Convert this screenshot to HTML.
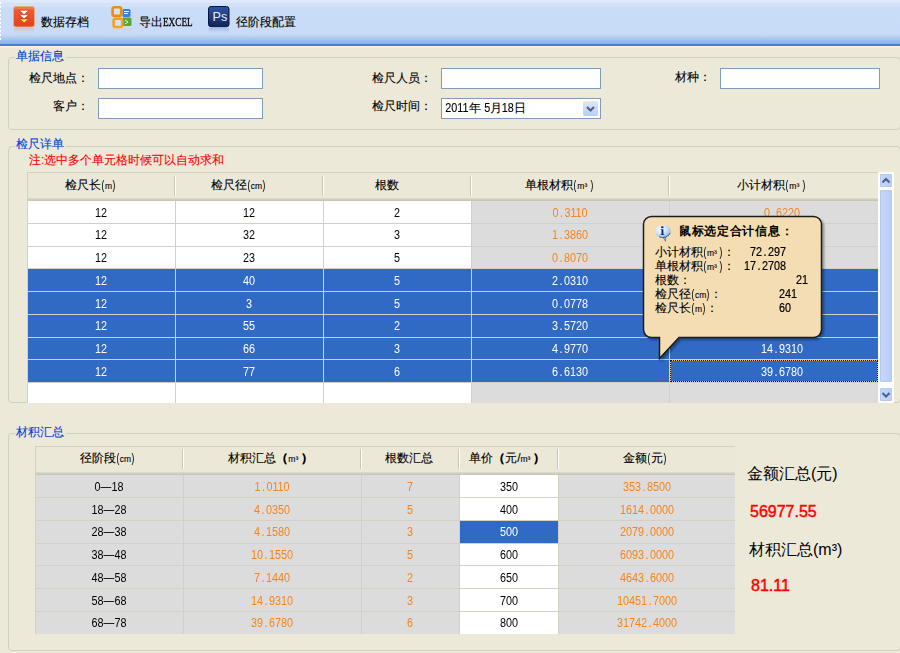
<!DOCTYPE html>
<html><head><meta charset="utf-8">
<style>
*{box-sizing:border-box;margin:0;padding:0}
html,body{width:900px;height:653px;overflow:hidden;background:#ece9d8;font-family:"Liberation Sans",sans-serif;font-size:12px;color:#000}
.lbl,.tbt,.gt,.tl{-webkit-text-stroke:.12px}
.nd{display:inline-block;transform:scaleX(.9);margin:0 -.5px}
.u{font-size:8.5px;font-family:"Liberation Sans",sans-serif}
.p{font-size:12px;display:inline-block;transform:scaleX(.7)}
.a{position:absolute}
#tb{left:0;top:0;width:900px;height:46px;background:linear-gradient(#dfeafb 0,#dce8fb 3px,#d2e2f9 3px,#d2e2f9 7px,#c9dcf8 7px,#c8dcf8 34px,#aac6ef 39px,#8cb0e5 44px,#4d7dc8 44px,#4d7dc8 46px)}
#tb2{left:0;top:46px;width:900px;height:2px;background:linear-gradient(#fdf7e0,#f2eedc)}
.tbt{font-size:12px;top:14.5px;line-height:14px;color:#000}
.grp{border:1px solid #d0d0bf;border-radius:4px}
.gt{color:#0046d5;background:#ece9d8;line-height:13px;padding:1px 2px 0 1px;font-size:12px}
.lbl{line-height:13px;font-size:12px}
.inp{background:#fff;border:1px solid #7f9db9}
.hdr{background:#ebe8d8;border-top:1px solid #d2cfc6}
.hs{width:2px;border-left:1px solid #c9c5b5;border-right:1px solid #fff}
.cell{position:absolute;text-align:center;line-height:22px;font-size:12px;font-family:"Liberation Sans",sans-serif;transform:scaleX(.9)}
.dp{display:inline-block;width:6.67px;text-align:center}

.sbb{background:linear-gradient(90deg,#c8d8fb,#b9cdf8);border:1px solid #fff;border-radius:2px;box-shadow:0 0 0 1px #b4c8f0 inset}
.tl{left:655px;font-size:12px;line-height:14px}
.tn{font-size:12px;transform:scaleX(.9);transform-origin:0 0;-webkit-text-stroke:.2px}
</style></head><body>
<!-- toolbar -->
<div id="tb" class="a"></div><div id="tb2" class="a"></div>
<div class="a" style="left:0;top:2px;width:1px;height:38px;background:repeating-linear-gradient(#fff 0 2px,transparent 2px 4px)"></div>

<!-- icon 1 -->
<svg class="a" style="left:13px;top:6px" width="22" height="30" viewBox="0 0 22 30">
<defs><linearGradient id="rg" x1="0" y1="0" x2="0" y2="1"><stop offset="0" stop-color="#f0603a"/><stop offset="1" stop-color="#e0401c"/></linearGradient>
<linearGradient id="rf" x1="0" y1="0" x2="0" y2="1"><stop offset="0" stop-color="#e0a090" stop-opacity=".45"/><stop offset="1" stop-color="#c8dcf8" stop-opacity="0"/></linearGradient></defs>
<rect x="0.5" y="0.5" width="21" height="20.5" rx="2.5" fill="url(#rg)" stroke="#f0a878" stroke-width="1"/>
<rect x="1.5" y="1.2" width="19" height="2" fill="#f88a6a" opacity=".6"/>
<path d="M6.3 4.3H15.8L11.05 8.6Z" fill="#fff" stroke="#a03018" stroke-width=".5"/>
<path d="M6.3 8.8H15.8L11.05 12.8Z" fill="#fff" stroke="#a03018" stroke-width=".5"/>
<path d="M6.8 13H15.5L11.15 16.9Z" fill="#ffe050" stroke="#a03018" stroke-width=".5"/>
<rect x="0.5" y="22" width="21" height="7" fill="url(#rf)"/>
</svg>
<div class="a tbt" style="left:41px">数据存档</div>

<!-- icon 2 -->
<svg class="a" style="left:111px;top:6px" width="21" height="30" viewBox="0 0 21 30">
<defs><linearGradient id="of" x1="0" y1="0" x2="0" y2="1"><stop offset="0" stop-color="#e8c8a0" stop-opacity=".4"/><stop offset="1" stop-color="#c8dcf8" stop-opacity="0"/></linearGradient></defs>
<rect x="11.5" y="3" width="8" height="8" rx="1.5" fill="#3a80da"/>
<path d="M13 5.5h5M13 7.5h4" stroke="#e8f2ff" stroke-width="1"/>
<rect x="11" y="11.5" width="9.5" height="8.5" rx="1.5" fill="#5ea430"/>
<path d="M14 14l3 2-3 2" stroke="#e8f4d8" stroke-width="1" fill="none"/>
<rect x="1.6" y="1.3" width="8.6" height="8.6" rx="2" fill="#cfe6fb" stroke="#f48a14" stroke-width="2.6"/>
<rect x="2.6" y="12.8" width="8.6" height="8.2" rx="2" fill="#cfe6fb" stroke="#f8a020" stroke-width="2.6"/>
<rect x="0" y="22" width="21" height="7" fill="url(#of)"/>
</svg>
<div class="a tbt" style="left:139px">导出<span style="display:inline-block;font-family:'Liberation Serif',serif;font-size:11.5px;transform:scaleX(.8);transform-origin:0 50%;-webkit-text-stroke:.3px">EXCEL</span></div>

<!-- icon 3 -->
<svg class="a" style="left:208px;top:6px" width="22" height="30" viewBox="0 0 22 30">
<defs><linearGradient id="pg" x1="0" y1="0" x2="0" y2="1"><stop offset="0" stop-color="#2c57a0"/><stop offset=".6" stop-color="#1c3a7a"/><stop offset="1" stop-color="#0f2458"/></linearGradient>
<linearGradient id="pf" x1="0" y1="0" x2="0" y2="1"><stop offset="0" stop-color="#6080b8" stop-opacity=".35"/><stop offset="1" stop-color="#c8dcf8" stop-opacity="0"/></linearGradient></defs>
<rect x="0.5" y="0.5" width="20.5" height="20.2" rx="2.5" fill="url(#pg)" stroke="#0a1838" stroke-width="1"/>
<text x="4.6" y="14.8" font-family="Liberation Sans" font-size="12.6" fill="#e6eefa">Ps</text>
<rect x="0.5" y="22" width="20.5" height="7" fill="url(#pf)"/>
</svg>
<div class="a tbt" style="left:236px">径阶段配置</div>

<!-- group 1 -->
<div class="a grp" style="left:8px;top:57px;width:893px;height:73px"></div>
<div class="a gt" style="left:15px;top:49px">单据信息</div>
<div class="a lbl" style="left:29px;top:72px">检尺地点：</div>
<div class="a inp" style="left:98px;top:68px;width:165px;height:21px"></div>
<div class="a lbl" style="left:53px;top:100px">客户：</div>
<div class="a inp" style="left:98px;top:98px;width:165px;height:21px"></div>
<div class="a lbl" style="left:372px;top:72px">检尺人员：</div>
<div class="a inp" style="left:441px;top:68px;width:160px;height:21px"></div>
<div class="a lbl" style="left:372px;top:100px">检尺时间：</div>
<div class="a inp" style="left:441px;top:98px;width:160px;height:21px"></div>
<div class="a lbl" style="left:444px;top:101.5px"><span class=nd>2011</span>年&nbsp;<span class=nd>5</span>月<span class=nd>18</span>日</div>
<div class="a" style="left:583px;top:101px;width:15px;height:15px;background:linear-gradient(#dfe8fb,#b8cdf6);border-radius:2px"></div>
<svg class="a" style="left:583px;top:101px" width="15" height="15"><path d="M4 6l3.5 3.5L11 6" stroke="#4d6185" stroke-width="2" fill="none"/></svg>
<div class="a lbl" style="left:675px;top:71px">材种：</div>
<div class="a inp" style="left:720px;top:68px;width:160px;height:21px"></div>

<!-- group 2 -->
<div class="a grp" style="left:8px;top:146px;width:893px;height:257px"></div>
<div class="a gt" style="left:15px;top:137px">检尺详单</div>
<div class="a lbl" style="left:29px;top:154px;color:#f00">注:选中多个单元格时候可以自动求和</div>

<div class="a" style="left:27px;top:172px;width:851px;height:231px;background:#fff"></div>
<div class="a hdr" style="left:27px;top:172px;width:851px;height:28.5px"></div>
<div class="a" style="left:27px;top:198px;width:851px;height:3px;background:linear-gradient(#e0dccd,#c5c1b0)"></div>
<div class="a lbl" style="left:10.5px;width:160px;text-align:center;top:179px">检尺长<span class=p>(</span><span class=u>m</span><span class=p>)</span></div>
<div class="a lbl" style="left:158.5px;width:160px;text-align:center;top:179px">检尺径<span class=p>(</span><span class=u>cm</span><span class=p>)</span></div>
<div class="a lbl" style="left:306.5px;width:160px;text-align:center;top:179px">根数</div>
<div class="a lbl" style="left:479.5px;width:160px;text-align:center;top:179px">单根材积<span class=p>(</span><span class=u>m³</span>&thinsp;<span class=p>)</span></div>
<div class="a lbl" style="left:691.5px;width:160px;text-align:center;top:179px">小计材积<span class=p>(</span><span class=u>m³</span>&thinsp;<span class=p>)</span></div>
<div class="a hs" style="left:174px;top:176px;height:20px"></div>
<div class="a hs" style="left:322px;top:176px;height:20px"></div>
<div class="a hs" style="left:470px;top:176px;height:20px"></div>
<div class="a hs" style="left:668px;top:176px;height:20px"></div>
<div class="a" style="left:27px;top:200.50px;width:148px;height:22.75px;background:#fff"></div>
<div class="a cell" style="left:41.0px;width:120px;top:201.50px;color:#000">12</div>
<div class="a" style="left:175px;top:200.50px;width:148px;height:22.75px;background:#fff"></div>
<div class="a cell" style="left:189.0px;width:120px;top:201.50px;color:#000">12</div>
<div class="a" style="left:323px;top:200.50px;width:148px;height:22.75px;background:#fff"></div>
<div class="a cell" style="left:337.0px;width:120px;top:201.50px;color:#000">2</div>
<div class="a" style="left:471px;top:200.50px;width:198px;height:22.75px;background:#dcdcdc"></div>
<div class="a cell" style="left:510.0px;width:120px;top:201.50px;color:#f78418">0<span class=dp>.</span>3110</div>
<div class="a" style="left:669px;top:200.50px;width:209px;height:22.75px;background:#dcdcdc"></div>
<div class="a cell" style="left:722.0px;width:120px;top:201.50px;color:#f78418">0<span class=dp>.</span>6220</div>
<div class="a" style="left:27px;top:223.25px;width:148px;height:22.75px;background:#fff"></div>
<div class="a cell" style="left:41.0px;width:120px;top:224.25px;color:#000">12</div>
<div class="a" style="left:175px;top:223.25px;width:148px;height:22.75px;background:#fff"></div>
<div class="a cell" style="left:189.0px;width:120px;top:224.25px;color:#000">32</div>
<div class="a" style="left:323px;top:223.25px;width:148px;height:22.75px;background:#fff"></div>
<div class="a cell" style="left:337.0px;width:120px;top:224.25px;color:#000">3</div>
<div class="a" style="left:471px;top:223.25px;width:198px;height:22.75px;background:#dcdcdc"></div>
<div class="a cell" style="left:510.0px;width:120px;top:224.25px;color:#f78418">1<span class=dp>.</span>3860</div>
<div class="a" style="left:669px;top:223.25px;width:209px;height:22.75px;background:#dcdcdc"></div>
<div class="a cell" style="left:722.0px;width:120px;top:224.25px;color:#f78418">4<span class=dp>.</span>1580</div>
<div class="a" style="left:27px;top:246.00px;width:148px;height:22.75px;background:#fff"></div>
<div class="a cell" style="left:41.0px;width:120px;top:247.00px;color:#000">12</div>
<div class="a" style="left:175px;top:246.00px;width:148px;height:22.75px;background:#fff"></div>
<div class="a cell" style="left:189.0px;width:120px;top:247.00px;color:#000">23</div>
<div class="a" style="left:323px;top:246.00px;width:148px;height:22.75px;background:#fff"></div>
<div class="a cell" style="left:337.0px;width:120px;top:247.00px;color:#000">5</div>
<div class="a" style="left:471px;top:246.00px;width:198px;height:22.75px;background:#dcdcdc"></div>
<div class="a cell" style="left:510.0px;width:120px;top:247.00px;color:#f78418">0<span class=dp>.</span>8070</div>
<div class="a" style="left:669px;top:246.00px;width:209px;height:22.75px;background:#dcdcdc"></div>
<div class="a cell" style="left:722.0px;width:120px;top:247.00px;color:#f78418">4<span class=dp>.</span>0350</div>
<div class="a" style="left:27px;top:268.75px;width:148px;height:22.75px;background:#316ac5"></div>
<div class="a cell" style="left:41.0px;width:120px;top:269.75px;color:#fff">12</div>
<div class="a" style="left:175px;top:268.75px;width:148px;height:22.75px;background:#316ac5"></div>
<div class="a cell" style="left:189.0px;width:120px;top:269.75px;color:#fff">40</div>
<div class="a" style="left:323px;top:268.75px;width:148px;height:22.75px;background:#316ac5"></div>
<div class="a cell" style="left:337.0px;width:120px;top:269.75px;color:#fff">5</div>
<div class="a" style="left:471px;top:268.75px;width:198px;height:22.75px;background:#316ac5"></div>
<div class="a cell" style="left:510.0px;width:120px;top:269.75px;color:#fff">2<span class=dp>.</span>0310</div>
<div class="a" style="left:669px;top:268.75px;width:209px;height:22.75px;background:#316ac5"></div>
<div class="a cell" style="left:722.0px;width:120px;top:269.75px;color:#fff">10<span class=dp>.</span>1550</div>
<div class="a" style="left:27px;top:291.50px;width:148px;height:22.75px;background:#316ac5"></div>
<div class="a cell" style="left:41.0px;width:120px;top:292.50px;color:#fff">12</div>
<div class="a" style="left:175px;top:291.50px;width:148px;height:22.75px;background:#316ac5"></div>
<div class="a cell" style="left:189.0px;width:120px;top:292.50px;color:#fff">3</div>
<div class="a" style="left:323px;top:291.50px;width:148px;height:22.75px;background:#316ac5"></div>
<div class="a cell" style="left:337.0px;width:120px;top:292.50px;color:#fff">5</div>
<div class="a" style="left:471px;top:291.50px;width:198px;height:22.75px;background:#316ac5"></div>
<div class="a cell" style="left:510.0px;width:120px;top:292.50px;color:#fff">0<span class=dp>.</span>0778</div>
<div class="a" style="left:669px;top:291.50px;width:209px;height:22.75px;background:#316ac5"></div>
<div class="a cell" style="left:722.0px;width:120px;top:292.50px;color:#fff">0<span class=dp>.</span>3890</div>
<div class="a" style="left:27px;top:314.25px;width:148px;height:22.75px;background:#316ac5"></div>
<div class="a cell" style="left:41.0px;width:120px;top:315.25px;color:#fff">12</div>
<div class="a" style="left:175px;top:314.25px;width:148px;height:22.75px;background:#316ac5"></div>
<div class="a cell" style="left:189.0px;width:120px;top:315.25px;color:#fff">55</div>
<div class="a" style="left:323px;top:314.25px;width:148px;height:22.75px;background:#316ac5"></div>
<div class="a cell" style="left:337.0px;width:120px;top:315.25px;color:#fff">2</div>
<div class="a" style="left:471px;top:314.25px;width:198px;height:22.75px;background:#316ac5"></div>
<div class="a cell" style="left:510.0px;width:120px;top:315.25px;color:#fff">3<span class=dp>.</span>5720</div>
<div class="a" style="left:669px;top:314.25px;width:209px;height:22.75px;background:#316ac5"></div>
<div class="a cell" style="left:722.0px;width:120px;top:315.25px;color:#fff">7<span class=dp>.</span>1440</div>
<div class="a" style="left:27px;top:337.00px;width:148px;height:22.75px;background:#316ac5"></div>
<div class="a cell" style="left:41.0px;width:120px;top:338.00px;color:#fff">12</div>
<div class="a" style="left:175px;top:337.00px;width:148px;height:22.75px;background:#316ac5"></div>
<div class="a cell" style="left:189.0px;width:120px;top:338.00px;color:#fff">66</div>
<div class="a" style="left:323px;top:337.00px;width:148px;height:22.75px;background:#316ac5"></div>
<div class="a cell" style="left:337.0px;width:120px;top:338.00px;color:#fff">3</div>
<div class="a" style="left:471px;top:337.00px;width:198px;height:22.75px;background:#316ac5"></div>
<div class="a cell" style="left:510.0px;width:120px;top:338.00px;color:#fff">4<span class=dp>.</span>9770</div>
<div class="a" style="left:669px;top:337.00px;width:209px;height:22.75px;background:#316ac5"></div>
<div class="a cell" style="left:722.0px;width:120px;top:338.00px;color:#fff">14<span class=dp>.</span>9310</div>
<div class="a" style="left:27px;top:359.75px;width:148px;height:22.75px;background:#316ac5"></div>
<div class="a cell" style="left:41.0px;width:120px;top:360.75px;color:#fff">12</div>
<div class="a" style="left:175px;top:359.75px;width:148px;height:22.75px;background:#316ac5"></div>
<div class="a cell" style="left:189.0px;width:120px;top:360.75px;color:#fff">77</div>
<div class="a" style="left:323px;top:359.75px;width:148px;height:22.75px;background:#316ac5"></div>
<div class="a cell" style="left:337.0px;width:120px;top:360.75px;color:#fff">6</div>
<div class="a" style="left:471px;top:359.75px;width:198px;height:22.75px;background:#316ac5"></div>
<div class="a cell" style="left:510.0px;width:120px;top:360.75px;color:#fff">6<span class=dp>.</span>6130</div>
<div class="a" style="left:669px;top:359.75px;width:209px;height:22.75px;background:#316ac5"></div>
<div class="a cell" style="left:722.0px;width:120px;top:360.75px;color:#fff">39<span class=dp>.</span>6780</div>
<div class="a" style="left:27px;top:382.50px;width:148px;height:20.00px;background:#fff"></div>
<div class="a" style="left:175px;top:382.50px;width:148px;height:20.00px;background:#fff"></div>
<div class="a" style="left:323px;top:382.50px;width:148px;height:20.00px;background:#fff"></div>
<div class="a" style="left:471px;top:382.50px;width:198px;height:20.00px;background:#dcdcdc"></div>
<div class="a" style="left:669px;top:382.50px;width:209px;height:20.00px;background:#dcdcdc"></div>
<div class="a" style="left:27px;top:222.75px;width:851px;height:1px;background:#d4d0c6"></div>
<div class="a" style="left:27px;top:245.50px;width:851px;height:1px;background:#d4d0c6"></div>
<div class="a" style="left:27px;top:268.25px;width:851px;height:1px;background:#d4d0c6"></div>
<div class="a" style="left:27px;top:291.00px;width:851px;height:1px;background:#d4d0c6"></div>
<div class="a" style="left:27px;top:313.75px;width:851px;height:1px;background:#d4d0c6"></div>
<div class="a" style="left:27px;top:336.50px;width:851px;height:1px;background:#d4d0c6"></div>
<div class="a" style="left:27px;top:359.25px;width:851px;height:1px;background:#d4d0c6"></div>
<div class="a" style="left:27px;top:382.00px;width:851px;height:1px;background:#d4d0c6"></div>
<div class="a" style="left:175px;top:201px;width:1px;height:202px;background:#d4d0c6"></div>
<div class="a" style="left:323px;top:201px;width:1px;height:202px;background:#d4d0c6"></div>
<div class="a" style="left:471px;top:201px;width:1px;height:202px;background:#d4d0c6"></div>
<div class="a" style="left:669px;top:201px;width:1px;height:202px;background:#d4d0c6"></div>
<div class="a" style="left:670px;top:360.25px;width:208px;height:22px;border:1px solid #f2b674"></div><div class="a" style="left:670px;top:360.25px;width:208px;height:22px;border:1px dotted #111"></div>
<div class="a" style="left:878px;top:172px;width:16px;height:231px;background:#fbfbf8"></div>
<div class="a sbb" style="left:879px;top:173px;width:14px;height:15px"></div>
<svg class="a" style="left:879px;top:173px" width="14" height="15"><path d="M3.5 9.5L7 6l3.5 3.5" stroke="#4d6185" stroke-width="2" fill="none"/></svg>
<div class="a sbb" style="left:879px;top:189px;width:14px;height:194px"></div>
<div class="a sbb" style="left:879px;top:387px;width:14px;height:15px"></div>
<svg class="a" style="left:879px;top:387px" width="14" height="15"><path d="M3.5 6L7 9.5l3.5-3.5" stroke="#4d6185" stroke-width="2" fill="none"/></svg>
<div class="a" style="left:27px;top:172px;width:1px;height:231px;background:#d4d0c8"></div>

<!-- group 3 -->
<div class="a grp" style="left:8px;top:433px;width:893px;height:218px"></div>
<div class="a gt" style="left:15px;top:425px">材积汇总</div>
<div class="a hdr" style="left:35px;top:446px;width:700px;height:28.75px"></div>
<div class="a" style="left:35px;top:472px;width:700px;height:3px;background:linear-gradient(#e0dccd,#c5c1b0)"></div>
<div class="a lbl" style="left:27.5px;width:160px;text-align:center;top:452px">径阶段<span class=p>(</span><span class=u>cm</span><span class=p>)</span></div>
<div class="a lbl" style="left:190.5px;width:160px;text-align:center;top:452px">材积汇总<b>（</b><span class=u>m³</span>&thinsp;<b>）</b></div>
<div class="a lbl" style="left:328.5px;width:160px;text-align:center;top:452px">根数汇总</div>
<div class="a lbl" style="left:427.0px;width:160px;text-align:center;top:452px">单价<b>（</b>元/<span class=u>m³</span>&thinsp;<b>）</b></div>
<div class="a lbl" style="left:565.0px;width:160px;text-align:center;top:452px">金额<span class=p>(</span>元<span class=p>)</span></div>
<div class="a hs" style="left:182px;top:449px;height:20px"></div>
<div class="a hs" style="left:360px;top:449px;height:20px"></div>
<div class="a hs" style="left:458px;top:449px;height:20px"></div>
<div class="a hs" style="left:557px;top:449px;height:20px"></div>
<div class="a" style="left:35px;top:474.75px;width:148px;height:22.75px;background:#dcdcdc"></div>
<div class="a cell" style="left:49.0px;width:120px;top:475.75px;color:#000">0—18</div>
<div class="a" style="left:183px;top:474.75px;width:178px;height:22.75px;background:#dcdcdc"></div>
<div class="a cell" style="left:212.0px;width:120px;top:475.75px;color:#f78418">1<span class=dp>.</span>0110</div>
<div class="a" style="left:361px;top:474.75px;width:98px;height:22.75px;background:#dcdcdc"></div>
<div class="a cell" style="left:350.0px;width:120px;top:475.75px;color:#f78418">7</div>
<div class="a" style="left:459px;top:474.75px;width:99px;height:22.75px;background:#fff"></div>
<div class="a cell" style="left:448.5px;width:120px;top:475.75px;color:#000">350</div>
<div class="a" style="left:558px;top:474.75px;width:177px;height:22.75px;background:#dcdcdc"></div>
<div class="a cell" style="left:586.5px;width:120px;top:475.75px;color:#f78418">353<span class=dp>.</span>8500</div>
<div class="a" style="left:35px;top:497.50px;width:148px;height:22.75px;background:#dcdcdc"></div>
<div class="a cell" style="left:49.0px;width:120px;top:498.50px;color:#000">18—28</div>
<div class="a" style="left:183px;top:497.50px;width:178px;height:22.75px;background:#dcdcdc"></div>
<div class="a cell" style="left:212.0px;width:120px;top:498.50px;color:#f78418">4<span class=dp>.</span>0350</div>
<div class="a" style="left:361px;top:497.50px;width:98px;height:22.75px;background:#dcdcdc"></div>
<div class="a cell" style="left:350.0px;width:120px;top:498.50px;color:#f78418">5</div>
<div class="a" style="left:459px;top:497.50px;width:99px;height:22.75px;background:#fff"></div>
<div class="a cell" style="left:448.5px;width:120px;top:498.50px;color:#000">400</div>
<div class="a" style="left:558px;top:497.50px;width:177px;height:22.75px;background:#dcdcdc"></div>
<div class="a cell" style="left:586.5px;width:120px;top:498.50px;color:#f78418">1614<span class=dp>.</span>0000</div>
<div class="a" style="left:35px;top:520.25px;width:148px;height:22.75px;background:#dcdcdc"></div>
<div class="a cell" style="left:49.0px;width:120px;top:521.25px;color:#000">28—38</div>
<div class="a" style="left:183px;top:520.25px;width:178px;height:22.75px;background:#dcdcdc"></div>
<div class="a cell" style="left:212.0px;width:120px;top:521.25px;color:#f78418">4<span class=dp>.</span>1580</div>
<div class="a" style="left:361px;top:520.25px;width:98px;height:22.75px;background:#dcdcdc"></div>
<div class="a cell" style="left:350.0px;width:120px;top:521.25px;color:#f78418">3</div>
<div class="a" style="left:459px;top:520.25px;width:99px;height:22.75px;background:#316ac5"></div>
<div class="a cell" style="left:448.5px;width:120px;top:521.25px;color:#fff">500</div>
<div class="a" style="left:558px;top:520.25px;width:177px;height:22.75px;background:#dcdcdc"></div>
<div class="a cell" style="left:586.5px;width:120px;top:521.25px;color:#f78418">2079<span class=dp>.</span>0000</div>
<div class="a" style="left:35px;top:543.00px;width:148px;height:22.75px;background:#dcdcdc"></div>
<div class="a cell" style="left:49.0px;width:120px;top:544.00px;color:#000">38—48</div>
<div class="a" style="left:183px;top:543.00px;width:178px;height:22.75px;background:#dcdcdc"></div>
<div class="a cell" style="left:212.0px;width:120px;top:544.00px;color:#f78418">10<span class=dp>.</span>1550</div>
<div class="a" style="left:361px;top:543.00px;width:98px;height:22.75px;background:#dcdcdc"></div>
<div class="a cell" style="left:350.0px;width:120px;top:544.00px;color:#f78418">5</div>
<div class="a" style="left:459px;top:543.00px;width:99px;height:22.75px;background:#fff"></div>
<div class="a cell" style="left:448.5px;width:120px;top:544.00px;color:#000">600</div>
<div class="a" style="left:558px;top:543.00px;width:177px;height:22.75px;background:#dcdcdc"></div>
<div class="a cell" style="left:586.5px;width:120px;top:544.00px;color:#f78418">6093<span class=dp>.</span>0000</div>
<div class="a" style="left:35px;top:565.75px;width:148px;height:22.75px;background:#dcdcdc"></div>
<div class="a cell" style="left:49.0px;width:120px;top:566.75px;color:#000">48—58</div>
<div class="a" style="left:183px;top:565.75px;width:178px;height:22.75px;background:#dcdcdc"></div>
<div class="a cell" style="left:212.0px;width:120px;top:566.75px;color:#f78418">7<span class=dp>.</span>1440</div>
<div class="a" style="left:361px;top:565.75px;width:98px;height:22.75px;background:#dcdcdc"></div>
<div class="a cell" style="left:350.0px;width:120px;top:566.75px;color:#f78418">2</div>
<div class="a" style="left:459px;top:565.75px;width:99px;height:22.75px;background:#fff"></div>
<div class="a cell" style="left:448.5px;width:120px;top:566.75px;color:#000">650</div>
<div class="a" style="left:558px;top:565.75px;width:177px;height:22.75px;background:#dcdcdc"></div>
<div class="a cell" style="left:586.5px;width:120px;top:566.75px;color:#f78418">4643<span class=dp>.</span>6000</div>
<div class="a" style="left:35px;top:588.50px;width:148px;height:22.75px;background:#dcdcdc"></div>
<div class="a cell" style="left:49.0px;width:120px;top:589.50px;color:#000">58—68</div>
<div class="a" style="left:183px;top:588.50px;width:178px;height:22.75px;background:#dcdcdc"></div>
<div class="a cell" style="left:212.0px;width:120px;top:589.50px;color:#f78418">14<span class=dp>.</span>9310</div>
<div class="a" style="left:361px;top:588.50px;width:98px;height:22.75px;background:#dcdcdc"></div>
<div class="a cell" style="left:350.0px;width:120px;top:589.50px;color:#f78418">3</div>
<div class="a" style="left:459px;top:588.50px;width:99px;height:22.75px;background:#fff"></div>
<div class="a cell" style="left:448.5px;width:120px;top:589.50px;color:#000">700</div>
<div class="a" style="left:558px;top:588.50px;width:177px;height:22.75px;background:#dcdcdc"></div>
<div class="a cell" style="left:586.5px;width:120px;top:589.50px;color:#f78418">10451<span class=dp>.</span>7000</div>
<div class="a" style="left:35px;top:611.25px;width:148px;height:22.75px;background:#dcdcdc"></div>
<div class="a cell" style="left:49.0px;width:120px;top:612.25px;color:#000">68—78</div>
<div class="a" style="left:183px;top:611.25px;width:178px;height:22.75px;background:#dcdcdc"></div>
<div class="a cell" style="left:212.0px;width:120px;top:612.25px;color:#f78418">39<span class=dp>.</span>6780</div>
<div class="a" style="left:361px;top:611.25px;width:98px;height:22.75px;background:#dcdcdc"></div>
<div class="a cell" style="left:350.0px;width:120px;top:612.25px;color:#f78418">6</div>
<div class="a" style="left:459px;top:611.25px;width:99px;height:22.75px;background:#fff"></div>
<div class="a cell" style="left:448.5px;width:120px;top:612.25px;color:#000">800</div>
<div class="a" style="left:558px;top:611.25px;width:177px;height:22.75px;background:#dcdcdc"></div>
<div class="a cell" style="left:586.5px;width:120px;top:612.25px;color:#f78418">31742<span class=dp>.</span>4000</div>
<div class="a" style="left:35px;top:497.00px;width:700px;height:1px;background:#d4d0c6"></div>
<div class="a" style="left:35px;top:519.75px;width:700px;height:1px;background:#d4d0c6"></div>
<div class="a" style="left:35px;top:542.50px;width:700px;height:1px;background:#d4d0c6"></div>
<div class="a" style="left:35px;top:565.25px;width:700px;height:1px;background:#d4d0c6"></div>
<div class="a" style="left:35px;top:588.00px;width:700px;height:1px;background:#d4d0c6"></div>
<div class="a" style="left:35px;top:610.75px;width:700px;height:1px;background:#d4d0c6"></div>
<div class="a" style="left:183px;top:475px;width:1px;height:159px;background:#d4d0c6"></div>
<div class="a" style="left:361px;top:475px;width:1px;height:159px;background:#d4d0c6"></div>
<div class="a" style="left:459px;top:475px;width:1px;height:159px;background:#d4d0c6"></div>
<div class="a" style="left:558px;top:475px;width:1px;height:159px;background:#d4d0c6"></div>
<div class="a" style="left:35px;top:446px;width:1px;height:188px;background:#d4d0c8"></div>

<div class="a" style="left:747px;top:465px;font-size:16px;line-height:18px">金额汇总(元)</div>
<div class="a" style="left:750px;top:503px;font-size:16px;line-height:18px;color:#f00;-webkit-text-stroke:.45px">56977.55</div>
<div class="a" style="left:749px;top:541px;font-size:16px;line-height:18px">材积汇总(m³)</div>
<div class="a" style="left:751px;top:577px;font-size:16px;line-height:18px;color:#f00;-webkit-text-stroke:.45px">81.11</div>
<svg class="a" style="left:640px;top:213px" width="190" height="150" viewBox="640 213 190 150">
<defs><filter id="sh" x="-10%" y="-10%" width="130%" height="130%"><feDropShadow dx="2" dy="2" stdDeviation="1" flood-color="#000" flood-opacity=".35"/></filter></defs>
<path filter="url(#sh)" d="M651.5 216.5H813.5A8 8 0 0 1 821.5 224.5V329.5A8 8 0 0 1 813.5 337.5H679L659.5 358.5V337.5H651.5A8 8 0 0 1 643.5 329.5V224.5A8 8 0 0 1 651.5 216.5Z" fill="#f4ddb2" stroke="#1a1a1a" stroke-width="1.5"/>
</svg>
<svg class="a" style="left:654px;top:224px" width="18" height="19" viewBox="0 0 18 19">
<defs><radialGradient id="ig" cx="38%" cy="35%" r="70%"><stop offset="0" stop-color="#ffffff"/><stop offset=".55" stop-color="#cfe2fa"/><stop offset="1" stop-color="#8ab0e0"/></radialGradient></defs>
<path d="M9 13.3L11.5 17.3L11.8 12.6Z" fill="#9ec0ea" stroke="#3a5a90" stroke-width=".6"/>
<ellipse cx="8.8" cy="7.3" rx="7.8" ry="6.3" fill="url(#ig)"/>
<path d="M16.2 8.8A7.8 6.3 0 0 1 5 12.8" stroke="#2a4a80" stroke-width="1" fill="none" opacity=".8"/>
<ellipse cx="8.3" cy="3.2" rx="1.4" ry="1" fill="#0a2a80"/>
<path d="M6.6 5.3H9.4V10.2H10.3V11H6.6V10.2H7.5V6.1H6.6Z" fill="#0a2a80"/>
</svg>
<div class="a" style="left:679px;top:224px;font-weight:bold;font-size:12px;line-height:14px;letter-spacing:.7px">鼠标选定合计信息：</div>
<div class="a tl" style="top:245px">小计材积<span class=p>(</span><span class=u>m³</span>&thinsp;<span class=p>)</span>：</div><div class="a tl tn" style="top:245px;left:750px">72<span class=dp>.</span>297</div>
<div class="a tl" style="top:259px">单根材积<span class=p>(</span><span class=u>m³</span>&thinsp;<span class=p>)</span>：</div><div class="a tl tn" style="top:259px;left:744px">17<span class=dp>.</span>2708</div>
<div class="a tl" style="top:273px">根数：</div><div class="a tl tn" style="top:273px;left:796px">21</div>
<div class="a tl" style="top:287px">检尺径<span class=p>(</span><span class=u>cm</span><span class=p>)</span>：</div><div class="a tl tn" style="top:287px;left:779px">241</div>
<div class="a tl" style="top:301px">检尺长<span class=p>(</span><span class=u>m</span><span class=p>)</span>：</div><div class="a tl tn" style="top:301px;left:779px">60</div>

</body></html>
